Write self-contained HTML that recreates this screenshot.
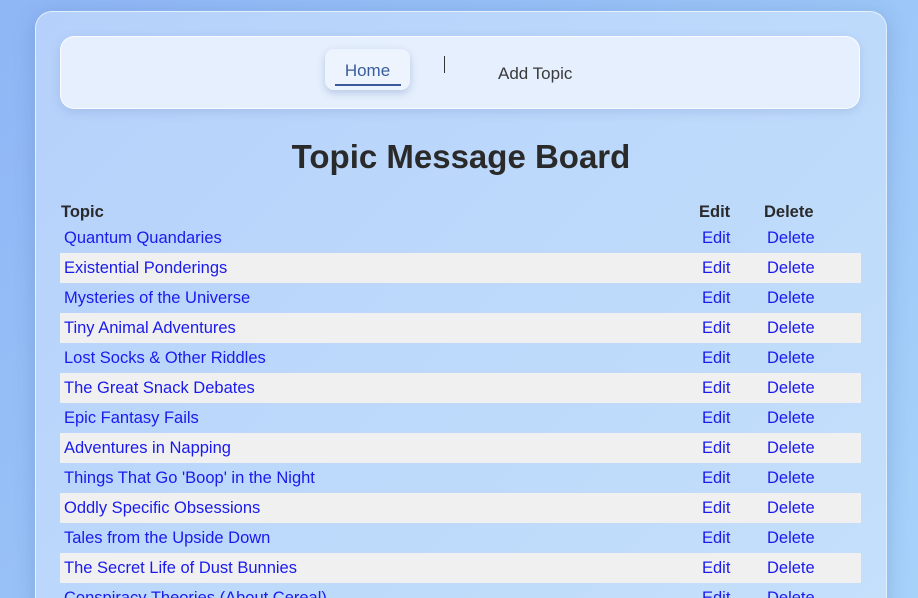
<!DOCTYPE html>
<html><head><style>
html,body{margin:0;padding:0;width:918px;height:598px;overflow:hidden;}
body{background:linear-gradient(135deg,#8fb6f5,#a6d2fa);font-family:"Liberation Sans",sans-serif;position:relative;}
.card{position:absolute;left:35px;top:11px;width:850px;height:620px;border-radius:17px;background:linear-gradient(135deg,#b5d1fb,#c4e0fb);border:1px solid rgba(255,255,255,.6);box-shadow:0 4px 20px rgba(60,90,150,.25);}
.nav{position:absolute;left:24px;top:24px;width:798px;height:71px;border-radius:14px;background:#e5effd;border:1px solid rgba(255,255,255,.8);box-shadow:0 3px 10px rgba(80,110,170,.2);}
.home{position:absolute;left:264px;top:12px;width:85px;height:41px;border-radius:9px;background:#edf4fe;box-shadow:0 3px 8px rgba(80,110,170,.3);}
.home span{position:absolute;left:0;width:85px;top:12px;text-align:center;color:#3a5c9c;font-size:17px;}
.home i{position:absolute;left:10px;top:35px;width:66px;height:2px;background:#3a5a9a;}
.sep{position:absolute;left:383px;top:19px;width:1px;height:17px;background:#333;}
.add{position:absolute;left:437px;top:27px;color:#3a3a3a;font-size:17px;}
h1{position:absolute;left:0;width:850px;top:126px;margin:0;text-align:center;font-size:33px;font-weight:bold;color:#2a2a2a;}
table{position:absolute;left:24px;top:189px;width:801px;border-collapse:collapse;font-size:16.5px;}
th{text-align:left;font-weight:bold;color:#2a2a2a;height:22px;padding:0 0 0 1px;}
td{height:30px;padding:0 0 0 4px;color:#1a1aee;}
tr.g td{background:#f0f0f0;}
.c2{width:64px;}.c3{width:97px;}
</style></head><body>
<div class="card">
<div class="nav"><div class="home"><span>Home</span><i></i></div><div class="sep"></div><div class="add">Add Topic</div></div>
<h1>Topic Message Board</h1>
<table>
<tr><th>Topic</th><th class="c2">Edit</th><th class="c3">Delete</th></tr>
<tr><td>Quantum Quandaries</td><td>Edit</td><td>Delete</td></tr>
<tr class="g"><td>Existential Ponderings</td><td>Edit</td><td>Delete</td></tr>
<tr><td>Mysteries of the Universe</td><td>Edit</td><td>Delete</td></tr>
<tr class="g"><td>Tiny Animal Adventures</td><td>Edit</td><td>Delete</td></tr>
<tr><td>Lost Socks &amp; Other Riddles</td><td>Edit</td><td>Delete</td></tr>
<tr class="g"><td>The Great Snack Debates</td><td>Edit</td><td>Delete</td></tr>
<tr><td>Epic Fantasy Fails</td><td>Edit</td><td>Delete</td></tr>
<tr class="g"><td>Adventures in Napping</td><td>Edit</td><td>Delete</td></tr>
<tr><td>Things That Go 'Boop' in the Night</td><td>Edit</td><td>Delete</td></tr>
<tr class="g"><td>Oddly Specific Obsessions</td><td>Edit</td><td>Delete</td></tr>
<tr><td>Tales from the Upside Down</td><td>Edit</td><td>Delete</td></tr>
<tr class="g"><td>The Secret Life of Dust Bunnies</td><td>Edit</td><td>Delete</td></tr>
<tr><td>Conspiracy Theories (About Cereal)</td><td>Edit</td><td>Delete</td></tr>
</table>
</div>
</body></html>
